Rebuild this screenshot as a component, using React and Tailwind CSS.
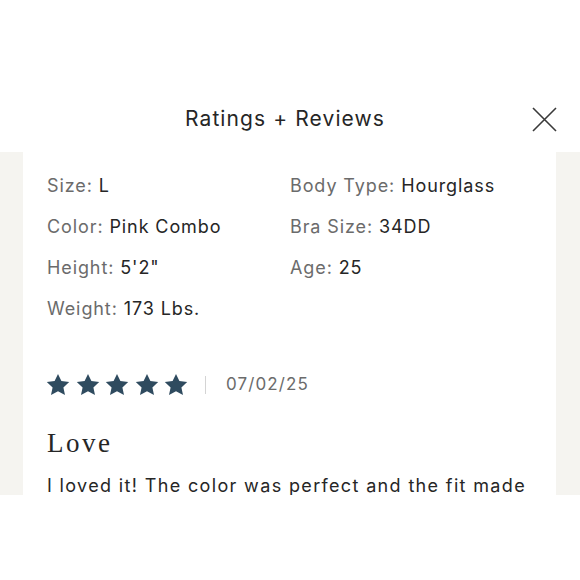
import React from "react";

const Star = () => (
  <svg width="24" height="24" viewBox="0 0 24 24" className="shrink-0">
    <path d="M12 1l3.4 7.1 7.8 1-5.8 5.3 1.6 7.7L12 18.3l-7 3.8 1.6-7.7L.8 9.1l7.8-1z" fill="#2f4b5f" />
  </svg>
);

const Attr = ({ label, value }) => (
  <div className="h-[41px] flex items-center text-[18px] tracking-[0.9px] whitespace-nowrap">
    <span className="text-[#6b6b6b]">{label}:&nbsp;</span>
    <span className="text-[#262626]">{value}</span>
  </div>
);

export default function App() {
  return (
    <div className="w-[580px] h-[580px] bg-white flex flex-col" style={{ fontFamily: "Inter, 'Open Sans', sans-serif" }}>
      <div className="h-[80px] shrink-0" />
      <div className="h-[72px] shrink-0 relative flex items-center justify-center pr-[10px]">
        <h1 className="text-[21px] text-[#262626] tracking-[1.1px] mt-[6px]">Ratings + Reviews</h1>
        <svg className="absolute left-[532px] top-[27px]" width="25" height="25" viewBox="0 0 25 25">
          <path d="M1 1L24 24M24 1L1 24" stroke="#3a3a3a" strokeWidth="1.6" fill="none" />
        </svg>
      </div>
      <div className="h-[343px] shrink-0 flex bg-[#f5f4f0]">
        <div className="w-[23px] shrink-0" />
        <div className="flex-1 bg-white overflow-hidden pl-[24px] pt-[13px]">
          <div className="grid grid-cols-[243px_1fr]">
            <Attr label="Size" value="L" />
            <Attr label="Body Type" value="Hourglass" />
            <Attr label="Color" value="Pink Combo" />
            <Attr label="Bra Size" value="34DD" />
            <Attr label="Height" value="5'2&quot;" />
            <Attr label="Age" value="25" />
            <Attr label="Weight" value="173 Lbs." />
          </div>
          <div className="mt-[41px] h-[30px] flex items-center">
            <div className="flex gap-[5.5px] -ml-[1px]">
              <Star /><Star /><Star /><Star /><Star />
            </div>
            <div className="w-px h-[18px] bg-[#d4d4d4] ml-[17px] mr-[20px]" />
            <span className="text-[17px] text-[#6b6b6b] tracking-[1.1px]">07/02/25</span>
          </div>
          <div className="mt-[25px] text-[27px] text-[#262626] leading-[36px] tracking-[2.5px]" style={{ fontFamily: "'Liberation Serif', serif" }}>Love</div>
          <div className="mt-[11px] text-[18px] text-[#262626] leading-[28px] tracking-[1.35px] whitespace-nowrap">
            I loved it! The color was perfect and the fit made
          </div>
        </div>
        <div className="w-[24px] shrink-0" />
      </div>
      <div className="flex-1 bg-white" />
    </div>
  );
}
